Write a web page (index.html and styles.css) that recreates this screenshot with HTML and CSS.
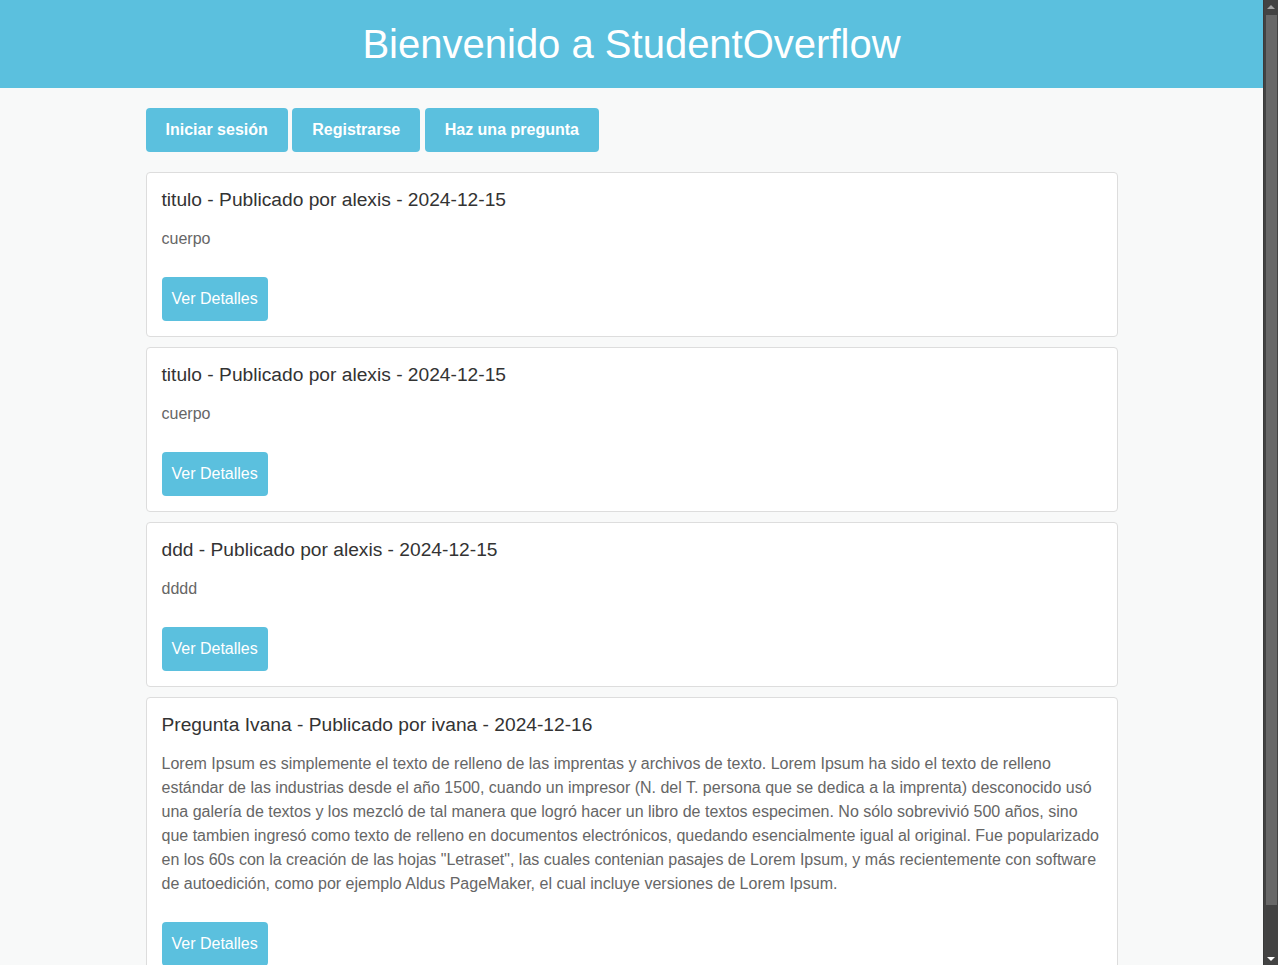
FILE: index.html
```html
<!DOCTYPE html>
<html lang="es">
<head>
<meta charset="utf-8">
<title>StudentOverflow</title>
<link rel="stylesheet" href="styles.css">
</head>
<body>
<header class="site-header">
  <h1 class="site-title">Bienvenido a StudentOverflow</h1>
</header>
<main class="container">
  <nav class="actions">
    <a class="btn btn-bold" href="#">Iniciar sesión</a>
    <a class="btn btn-bold" href="#">Registrarse</a>
    <a class="btn btn-bold" href="#">Haz una pregunta</a>
  </nav>
  <section class="questions">
    <article class="card">
      <h3 class="card-title">titulo - Publicado por alexis - 2024-12-15</h3>
      <p class="card-body">cuerpo</p>
      <a class="btn" href="#">Ver Detalles</a>
    </article>
    <article class="card">
      <h3 class="card-title">titulo - Publicado por alexis - 2024-12-15</h3>
      <p class="card-body">cuerpo</p>
      <a class="btn" href="#">Ver Detalles</a>
    </article>
    <article class="card">
      <h3 class="card-title">ddd - Publicado por alexis - 2024-12-15</h3>
      <p class="card-body">dddd</p>
      <a class="btn" href="#">Ver Detalles</a>
    </article>
    <article class="card">
      <h3 class="card-title">Pregunta Ivana - Publicado por ivana - 2024-12-16</h3>
      <p class="card-body">Lorem Ipsum es simplemente el texto de relleno de las imprentas y archivos de texto. Lorem Ipsum ha sido el texto de relleno estándar de las industrias desde el año 1500, cuando un impresor (N. del T. persona que se dedica a la imprenta) desconocido usó una galería de textos y los mezcló de tal manera que logró hacer un libro de textos especimen. No sólo sobrevivió 500 años, sino que tambien ingresó como texto de relleno en documentos electrónicos, quedando esencialmente igual al original. Fue popularizado en los 60s con la creación de las hojas "Letraset", las cuales contenian pasajes de Lorem Ipsum, y más recientemente con software de autoedición, como por ejemplo Aldus PageMaker, el cual incluye versiones de Lorem Ipsum.</p>
      <a class="btn" href="#">Ver Detalles</a>
    </article>
  </section>
</main>
<div class="fake-scrollbar" aria-hidden="true">
  <span class="sb-arrow sb-up"></span>
  <span class="sb-thumb"></span>
  <span class="sb-arrow sb-down"></span>
</div>
</body>
</html>
```

FILE: styles.css
```css
body {
  margin: 0;
  padding-right: 15px;
  background: #f8f9f9;
  font-family: "Liberation Sans", Arial, sans-serif;
  font-size: 16px;
  color: #333;
}

.site-header {
  background: #5bc0de;
  height: 88px;
  display: flex;
  align-items: center;
  justify-content: center;
}

.site-title {
  margin: 0;
  color: #fff;
  font-size: 40px;
  font-weight: normal;
  line-height: 1.1;
}

.container {
  max-width: 972px;
  margin: 0 auto;
  padding-top: 20px;
}

.actions {
  display: flex;
  gap: 4.45px;
  margin-bottom: 20px;
}

.btn {
  display: inline-block;
  background: #5bc0de;
  color: #fff;
  text-decoration: none;
  font-size: 16px;
  line-height: 24px;
  padding: 10px 10px;
  border-radius: 4px;
}

.btn-bold {
  font-weight: bold;
  padding: 10px 20px;
}

.questions {
  display: flex;
  flex-direction: column;
  gap: 10px;
}

.card {
  background: #fff;
  border: 1px solid #ddd;
  border-radius: 4px;
  padding: 16px 15px 15px;
}

.card-title {
  margin: 0 0 16px;
  font-size: 19.2px;
  font-weight: normal;
  line-height: 22px;
  color: #333;
}

.card-body {
  margin: 0 0 26px;
  line-height: 24px;
  color: #666;
}

/* Browser scrollbar drawn over the right edge */
.fake-scrollbar {
  position: fixed;
  top: 0;
  right: 0;
  bottom: 0;
  width: 15px;
  background: #434343;
  border-left: 1px solid #3a3a3a;
  box-sizing: border-box;
  display: flex;
  flex-direction: column;
  align-items: center;
}

.sb-arrow {
  width: 0;
  height: 0;
  border-left: 4px solid transparent;
  border-right: 4px solid transparent;
}

.sb-up {
  margin-top: 5px;
  border-bottom: 4px solid #a3a3a3;
}

.sb-thumb {
  margin-top: 6px;
  width: 11px;
  height: 890px;
  background: #686868;
}

.sb-down {
  margin-top: auto;
  margin-bottom: 4px;
  border-top: 4px solid #ffffff;
}
```
